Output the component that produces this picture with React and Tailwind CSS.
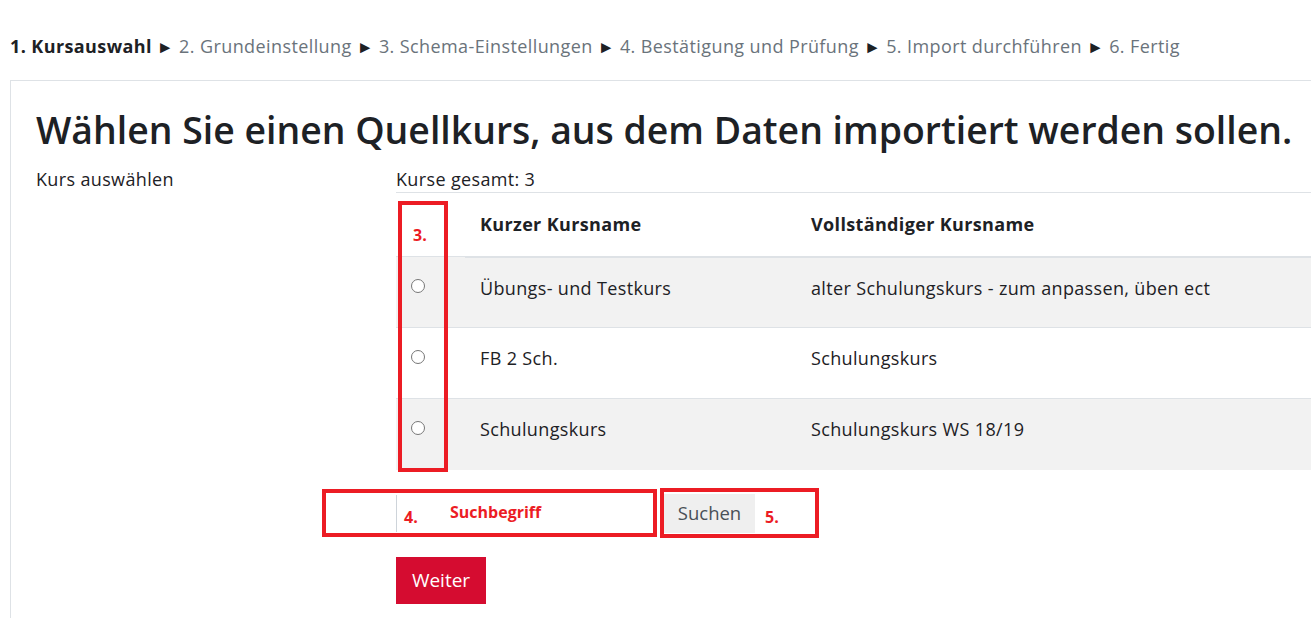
import React from 'react';

const steps = [
  '2. Grundeinstellung',
  '3. Schema-Einstellungen',
  '4. Bestätigung und Prüfung',
  '5. Import durchführen',
  '6. Fertig',
];

const courses = [
  { short: 'Übungs- und Testkurs', full: 'alter Schulungskurs - zum anpassen, üben ect' },
  { short: 'FB 2 Sch.', full: 'Schulungskurs' },
  { short: 'Schulungskurs', full: 'Schulungskurs WS 18/19' },
];

export default function App() {
  return (
    <div
      className="relative w-[1311px] h-[618px] overflow-hidden bg-white text-[#1d2125]"
      style={{ fontFamily: '"Open Sans", "Noto Sans", sans-serif' }}
    >
      {/* Breadcrumb of import steps */}
      <div className="pt-[33px] pl-[10px] h-[80px] text-[18px] leading-[26px] tracking-[0.4px] whitespace-nowrap">
        <span className="font-bold">1. Kursauswahl</span>
        {steps.map((s) => (
          <span key={s} className="text-[#6a737b]">
            <span className="text-[#1d2125] text-[17px] mx-[5px]">►</span>
            {s}
          </span>
        ))}
      </div>

      {/* Main card */}
      <div className="ml-[10px] border-l border-t border-[#dee2e6] pl-[25px] pt-[27px] h-[540px]">
        <h2 className="text-[37.4px] leading-[44px] font-semibold whitespace-nowrap">
          Wählen Sie einen Quellkurs, aus dem Daten importiert werden sollen.
        </h2>

        <div className="flex mt-[15px] text-[18px] tracking-[0.35px]">
          <div className="w-[360px] shrink-0 leading-[24px]">Kurs auswählen</div>
          <div className="w-[1000px] shrink-0">
            <div className="leading-[24px]">Kurse gesamt: 3</div>
            <table className="w-[1000px] border-collapse mt-[1px]">
              <thead>
                <tr className="h-[64px] border-t border-[#dee2e6]">
                  <th className="w-[69px]"></th>
                  <th className="w-[331px] text-left font-bold pl-[15px] border-b-2 border-[#dee2e6]">Kurzer Kursname</th>
                  <th className="text-left font-bold pl-[15px] border-b-2 border-[#dee2e6]">Vollständiger Kursname</th>
                </tr>
              </thead>
              <tbody>
                {courses.map((c, i) => (
                  <tr
                    key={c.short}
                    className={`h-[71px] border-t border-[#dee2e6] ${i % 2 === 0 ? 'bg-[#f2f2f2]' : 'bg-white'}`}
                  >
                    <td className="pl-[15px] align-top pt-[22px]">
                      <input type="radio" name="course" className="block w-[14px] h-[14px] m-0" />
                    </td>
                    <td className="pl-[15px] align-top pt-[17px] leading-[27px]">{c.short}</td>
                    <td className="pl-[15px] align-top pt-[17px] leading-[27px]">{c.full}</td>
                  </tr>
                ))}
              </tbody>
            </table>

            {/* Search */}
            <div className="flex mt-[24px] h-[39px]">
              <div className="w-[256px] h-[37px] border-l border-[#ced4da] mt-[1px]"></div>
              <button className="ml-[12px] w-[91px] h-[39px] bg-[#efefef] text-[#495057] text-[18.5px] tracking-normal">
                Suchen
              </button>
            </div>

            <button className="mt-[24px] w-[90px] h-[47px] bg-[#d50c30] text-white text-[19px] tracking-normal">
              Weiter
            </button>
          </div>
        </div>
      </div>

      {/* Red annotation boxes */}
      <div className="absolute left-[398px] top-[201px] w-[50px] h-[271px] border-4 border-[#ec1c24]">
        <span className="absolute left-[11px] top-[18px] text-[16px] font-bold text-[#ec1c24]">3.</span>
      </div>
      <div className="absolute left-[322px] top-[489px] w-[335px] h-[48px] border-4 border-[#ec1c24]">
        <span className="absolute left-[78px] top-[12px] text-[16px] font-bold text-[#ec1c24]">4.</span>
        <span className="absolute left-[124px] top-[7px] text-[16px] font-bold text-[#ec1c24]">Suchbegriff</span>
      </div>
      <div className="absolute left-[660px] top-[488px] w-[159px] h-[50px] border-4 border-[#ec1c24]">
        <span className="absolute left-[101px] top-[13px] text-[16px] font-bold text-[#ec1c24]">5.</span>
      </div>
    </div>
  );
}
